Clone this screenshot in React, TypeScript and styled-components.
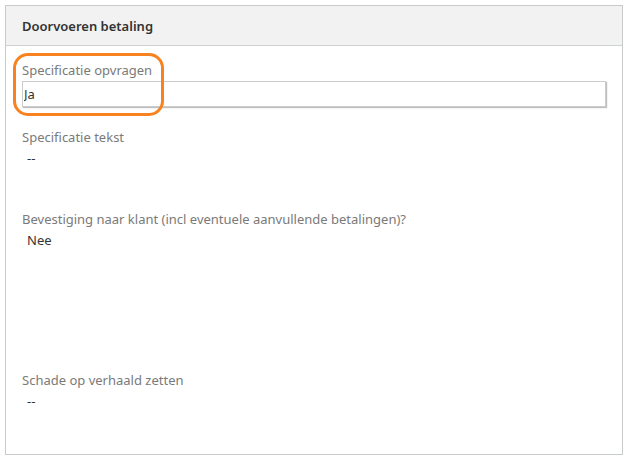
import styled, { createGlobalStyle } from "styled-components";

const GlobalStyle = createGlobalStyle`
  body {
    margin: 0;
    background: #ffffff;
    font-family: "Noto Sans", "Open Sans", sans-serif;
    font-size: 13px;
    color: #333333;
  }
`;

type FieldInfo = {
  label: string;
  value: string;
  input?: boolean;
  spacing: number;
};

const fields: FieldInfo[] = [
  { label: "Specificatie opvragen", value: "Ja", input: true, spacing: 0 },
  { label: "Specificatie tekst", value: "--", spacing: 21 },
  {
    label: "Bevestiging naar klant (incl eventuele aanvullende betalingen)?",
    value: "Nee",
    spacing: 42,
  },
  { label: "Schade op verhaald zetten", value: "--", spacing: 121 },
];

export default function App() {
  return (
    <>
      <GlobalStyle />
      <Panel>
        <Header>Doorvoeren betaling</Header>
        <Body>
          {fields.map((field) => (
            <Field key={field.label} $spacing={field.spacing}>
              <Label>{field.label}</Label>
              {field.input ? (
                <Input readOnly value={field.value} />
              ) : (
                <Value>{field.value}</Value>
              )}
            </Field>
          ))}
        </Body>
        <Highlight />
      </Panel>
    </>
  );
}

const Panel = styled.div`
  position: relative;
  box-sizing: border-box;
  margin: 5px 0 0 5px;
  width: 618px;
  height: 450px;
  border: 1px solid #c8cbcb;
  background: #ffffff;
`;

const Header = styled.div`
  display: flex;
  align-items: center;
  box-sizing: border-box;
  height: 40px;
  padding: 0 16px;
  background: #f2f2f2;
  border-bottom: 1px solid #cfd2d2;
  font-weight: 600;
  font-size: 13px;
  color: #333333;
`;

const Body = styled.div`
  display: flex;
  flex-direction: column;
  padding: 15px 16px 0 16px;
`;

const Field = styled.div<{ $spacing: number }>`
  display: flex;
  flex-direction: column;
  margin-top: ${(p) => p.$spacing}px;
`;

const Label = styled.div`
  line-height: 18px;
  color: #7a7a7a;
  margin-bottom: 2px;
`;

const Value = styled.div`
  line-height: 20px;
  padding-left: 5px;
  color: #333333;
`;

const Input = styled.input`
  box-sizing: border-box;
  width: 584px;
  height: 26px;
  padding: 0 1px;
  border: 1px solid #cccccc;
  box-shadow: 1px 1px 1px #bfbfbf;
  font-family: inherit;
  font-size: 13px;
  color: #333333;
  outline: none;
`;

const Highlight = styled.div`
  position: absolute;
  left: 7px;
  top: 47px;
  width: 151px;
  height: 63px;
  box-sizing: border-box;
  border: 3px solid #f7821f;
  border-radius: 15px;
  pointer-events: none;
`;
